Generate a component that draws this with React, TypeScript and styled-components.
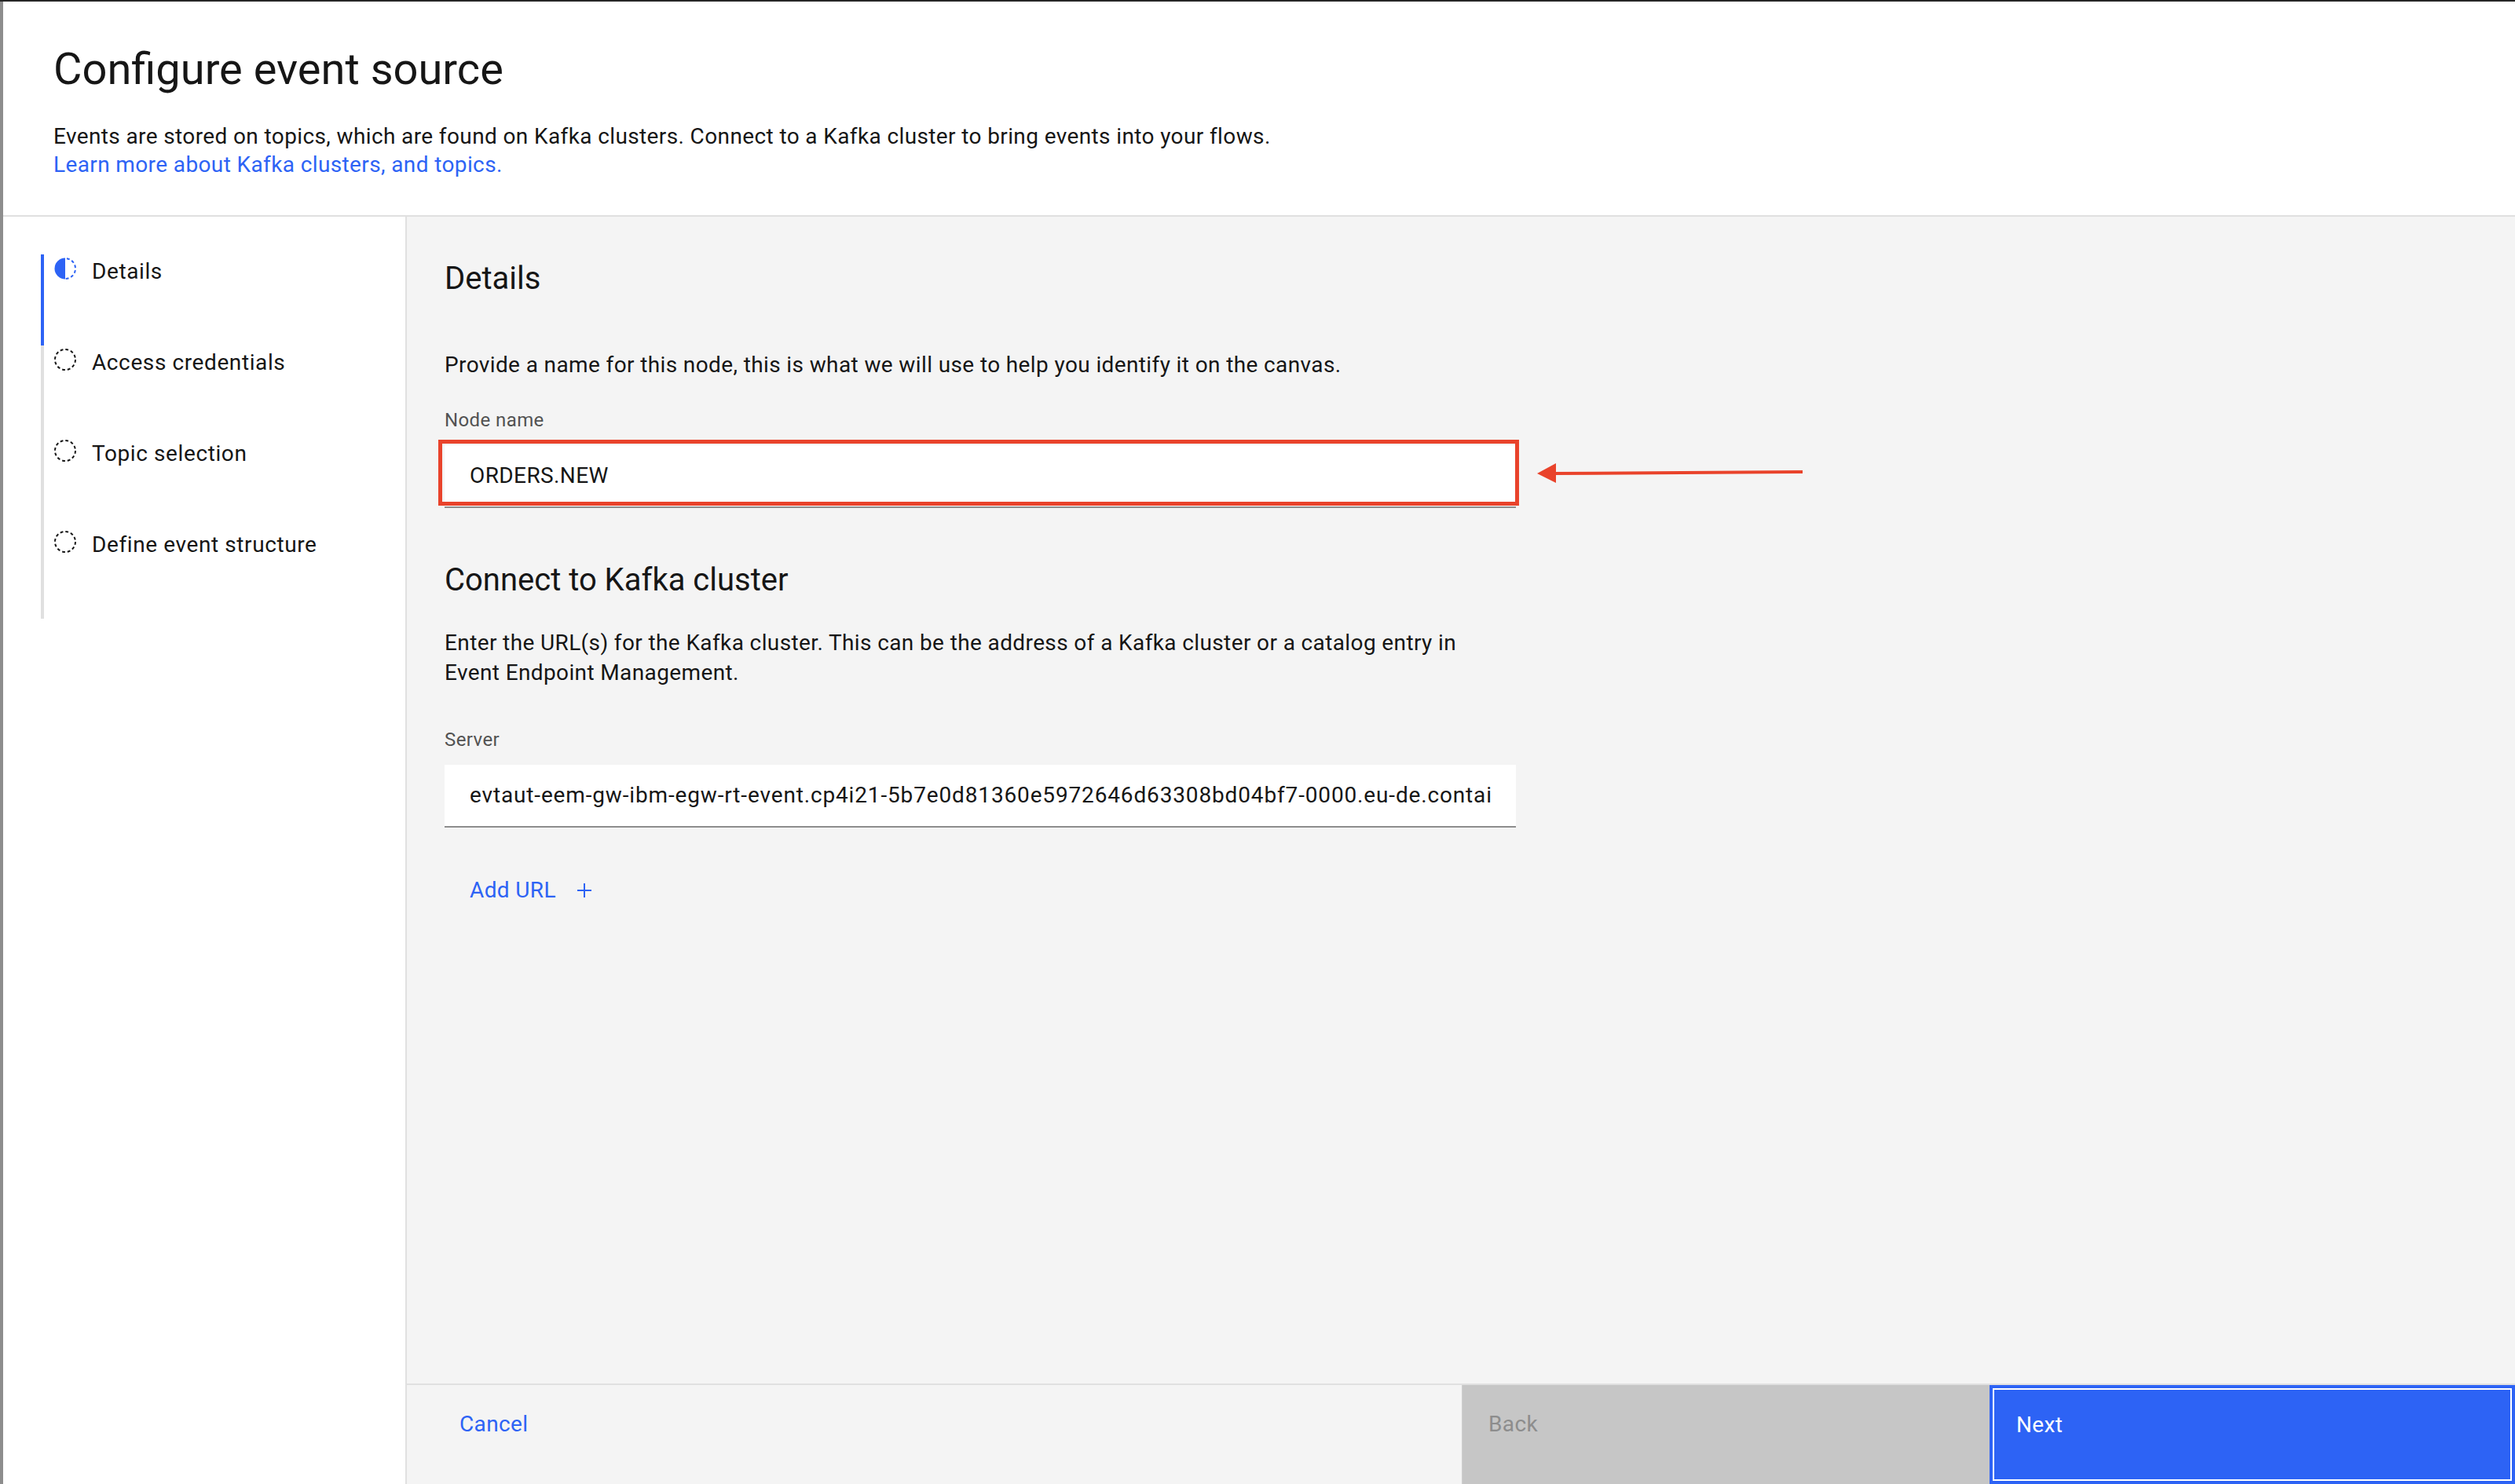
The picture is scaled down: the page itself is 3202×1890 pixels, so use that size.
import React from "react";
import styled, { createGlobalStyle } from "styled-components";

const FONT = `"Roboto", "Liberation Sans", sans-serif`;
const BLUE = "#2d63f5";
const RED = "#e9432b";
const BODY_SPACING = "0.38px";

const Global = createGlobalStyle`
  html, body { margin: 0; padding: 0; background: #ffffff; }
  body { width: 3202px; height: 1890px; overflow: hidden; font-family: ${FONT}; color: #161616; }
  * { box-sizing: border-box; }
`;

const Page = styled.div`
  position: relative;
  width: 3202px;
  height: 1890px;
  display: flex;
  flex-direction: column;
  border-top: 2px solid #262626;
`;

const Row = styled.div`
  display: flex;
  flex: 1;
  min-height: 0;
`;

const Backdrop = styled.div`
  width: 4px;
  flex-shrink: 0;
  background: #8d8d8d;
`;

const Modal = styled.div`
  flex: 1;
  min-width: 0;
  display: flex;
  flex-direction: column;
  background: #ffffff;
`;

const Header = styled.header`
  padding: 50px 0 46px 64px;
  border-bottom: 2px solid #e0e0e0;
`;

const Title = styled.h1`
  margin: 0;
  font-size: 56px;
  line-height: 72px;
  font-weight: 400;
  color: #161616;
`;

const Intro = styled.p`
  margin: 32px 0 0;
  font-size: 28px;
  line-height: 36px;
  letter-spacing: ${BODY_SPACING};
  color: #161616;
`;

const Link = styled.a`
  color: ${BLUE};
  text-decoration: none;
`;

const Body = styled.div`
  flex: 1;
  min-height: 0;
  display: flex;
`;

const Nav = styled.nav`
  width: 514px;
  flex-shrink: 0;
  border-right: 2px solid #e0e0e0;
  padding: 48px 0 0 48px;
  display: flex;
  flex-direction: column;
`;

const Step = styled.div<{ $active?: boolean }>`
  height: 116px;
  display: flex;
  align-items: flex-start;
  gap: 18px;
  padding-left: 11px;
  border-left: 4px solid ${(p) => (p.$active ? BLUE : "#e0e0e0")};
`;

const StepIcon = styled.svg`
  width: 32px;
  height: 32px;
  margin-top: 2px;
  flex-shrink: 0;
`;

const StepLabel = styled.span`
  margin-top: 4px;
  font-size: 28px;
  line-height: 36px;
  letter-spacing: 0.6px;
  color: #161616;
`;

const Main = styled.section`
  flex: 1;
  min-width: 0;
  display: flex;
  flex-direction: column;
  background: #f4f4f4;
`;

const Content = styled.div`
  flex: 1;
  padding: 53px 48px 0 48px;
  display: flex;
  flex-direction: column;
  align-items: flex-start;
`;

const SectionTitle = styled.h2<{ $gap?: number }>`
  margin: ${(p) => p.$gap ?? 0}px 0 0;
  font-size: 40px;
  line-height: 52px;
  font-weight: 400;
  color: #161616;
`;

const Para = styled.p<{ $gap: number; $lh?: number }>`
  margin: ${(p) => p.$gap}px 0 0;
  font-size: 28px;
  line-height: ${(p) => p.$lh ?? 40}px;
  letter-spacing: ${BODY_SPACING};
  color: #161616;
`;

const Label = styled.label<{ $gap: number }>`
  display: block;
  margin-top: ${(p) => p.$gap}px;
  font-size: 24px;
  line-height: 32px;
  letter-spacing: 0.4px;
  color: #525252;
`;

const Field = styled.div`
  position: relative;
  margin-top: 16px;
  width: 1364px;
  height: 80px;
  background: #ffffff;
  border-bottom: 2px solid #8d8d8d;
  padding: 0 32px;
`;

const FieldText = styled.span<{ $spacing?: number }>`
  display: block;
  font-size: 28px;
  line-height: 78px;
  letter-spacing: ${(p) => p.$spacing ?? 0.4}px;
  color: #161616;
  white-space: nowrap;
  overflow: hidden;
`;

const Highlight = styled.div`
  position: absolute;
  left: -8px;
  right: -4px;
  top: -7px;
  bottom: 1px;
  border: 5px solid ${RED};
  pointer-events: none;
`;

const AddButton = styled.button`
  margin-top: 40px;
  height: 80px;
  padding: 0 32px;
  display: inline-flex;
  align-items: center;
  gap: 20px;
  border: none;
  background: transparent;
  color: ${BLUE};
  font-family: ${FONT};
  font-size: 28px;
  line-height: 36px;
  letter-spacing: ${BODY_SPACING};
  cursor: pointer;
`;

const Footer = styled.footer`
  height: 128px;
  flex-shrink: 0;
  border-top: 2px solid #e0e0e0;
  display: flex;
`;

const FooterButton = styled.button<{ $kind: "ghost" | "disabled" | "primary" }>`
  font-family: ${FONT};
  font-size: 28px;
  line-height: 36px;
  letter-spacing: ${BODY_SPACING};
  text-align: left;
  display: flex;
  align-items: flex-start;
  cursor: pointer;
  ${(p) =>
    p.$kind === "ghost"
      ? `flex: 1; background: transparent; color: ${BLUE}; border: none; padding: 32px 0 0 67px;`
      : p.$kind === "disabled"
      ? `width: 672px; background: #c6c6c6; color: #8d8d8d; border: none; border-left: 1px solid #d0d0d0; padding: 32px 0 0 33px;`
      : `width: 669px; background: ${BLUE}; color: #ffffff; border: 4px solid ${BLUE}; box-shadow: inset 0 0 0 2px #ffffff; padding: 29px 0 0 30px;`}
`;

const Arrow = styled.svg`
  position: absolute;
  left: 1950px;
  top: 580px;
  width: 350px;
  height: 40px;
`;

const DashCircle = () => (
  <StepIcon viewBox="0 0 16 16">
    <circle cx="8" cy="8" r="6.5" fill="none" stroke="#161616" strokeWidth="1" strokeDasharray="1.9 1.5" />
  </StepIcon>
);

const HalfCircle = () => (
  <StepIcon viewBox="0 0 16 16">
    <path d="M8 1.25 A6.75 6.75 0 0 0 8 14.75 Z" fill={BLUE} />
    <path d="M8 1.5 A6.5 6.5 0 0 1 8 14.5" fill="none" stroke={BLUE} strokeWidth="1" strokeDasharray="1.9 1.5" strokeDashoffset="-1" />
  </StepIcon>
);

const PlusIcon = () => (
  <svg width="32" height="32" viewBox="0 0 16 16">
    <path d="M8 3.5v9M3.5 8h9" stroke={BLUE} strokeWidth="1" fill="none" />
  </svg>
);

const steps = ["Details", "Access credentials", "Topic selection", "Define event structure"];

export default function App() {
  return (
    <>
      <Global />
      <Page>
        <Row>
          <Backdrop />
          <Modal>
            <Header>
              <Title>Configure event source</Title>
              <Intro>
                Events are stored on topics, which are found on Kafka clusters. Connect to a Kafka cluster to bring events into your flows.
                <br />
                <Link href="#">Learn more about Kafka clusters, and topics.</Link>
              </Intro>
            </Header>
            <Body>
              <Nav>
                {steps.map((s, i) => (
                  <Step key={s} $active={i === 0}>
                    {i === 0 ? <HalfCircle /> : <DashCircle />}
                    <StepLabel>{s}</StepLabel>
                  </Step>
                ))}
              </Nav>
              <Main>
                <Content>
                  <SectionTitle>Details</SectionTitle>
                  <Para $gap={64}>
                    Provide a name for this node, this is what we will use to help you identify it on the canvas.
                  </Para>
                  <Label $gap={34}>Node name</Label>
                  <Field>
                    <FieldText>ORDERS.NEW</FieldText>
                    <Highlight />
                  </Field>
                  <SectionTitle $gap={66}>Connect to Kafka cluster</SectionTitle>
                  <Para $gap={35} $lh={38}>
                    Enter the URL(s) for the Kafka cluster. This can be the address of a Kafka cluster or a catalog entry in
                    <br />
                    Event Endpoint Management.
                  </Para>
                  <Label $gap={50}>Server</Label>
                  <Field>
                    <FieldText $spacing={0.85}>
                      evtaut-eem-gw-ibm-egw-rt-event.cp4i21-5b7e0d81360e5972646d63308bd04bf7-0000.eu-de.containers.appdomain.cloud:443
                    </FieldText>
                  </Field>
                  <AddButton>
                    Add URL
                    <PlusIcon />
                  </AddButton>
                </Content>
                <Footer>
                  <FooterButton $kind="ghost">Cancel</FooterButton>
                  <FooterButton $kind="disabled">Back</FooterButton>
                  <FooterButton $kind="primary">Next</FooterButton>
                </Footer>
              </Main>
            </Body>
          </Modal>
        </Row>
        <Arrow viewBox="0 0 350 40">
          <line x1="345" y1="19" x2="26" y2="21" stroke={RED} strokeWidth="4" />
          <polygon points="7,21 31,8 31,33" fill={RED} />
        </Arrow>
      </Page>
    </>
  );
}
